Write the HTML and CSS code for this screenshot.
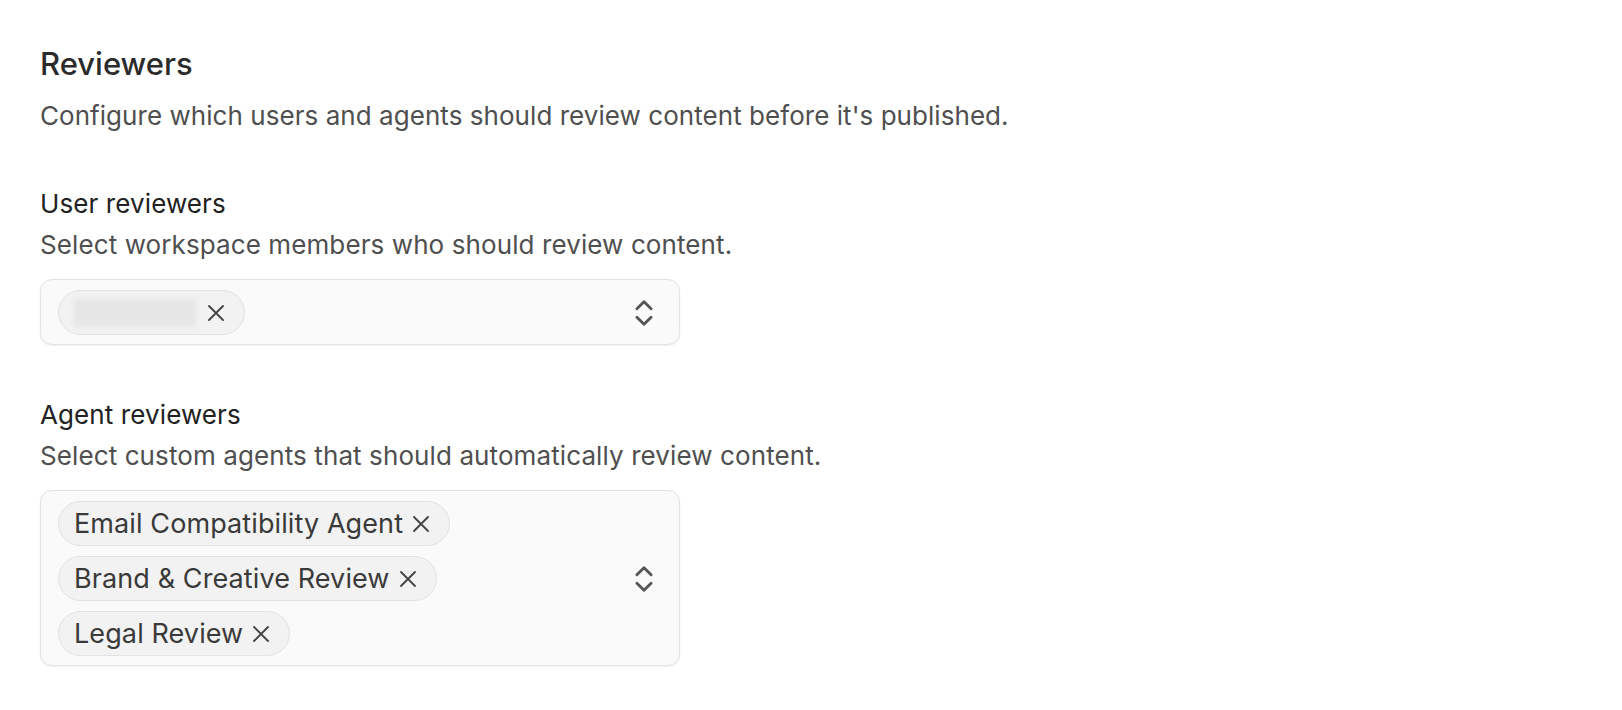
FILE: index.html
```html
<!DOCTYPE html>
<html lang="en">

<head>
  <meta charset="UTF-8">
  <meta name="viewport" content="width=device-width, initial-scale=1.0">
  <title>Reviewers</title>
  <link rel="stylesheet" href="styles.css">
</head>

<body>
  <div class="settings">
    <h1 class="settings-title">Reviewers</h1>
    <p class="settings-desc">Configure which users and agents should review content before it's published.</p>

    <div class="field">
      <div class="field-label">User reviewers</div>
      <div class="field-hint">Select workspace members who should review content.</div>
      <div class="multi-select">
        <div class="chips">
          <span class="chip">
            <span class="chip-hidden"></span>
            <svg class="chip-remove" viewBox="0 0 24 24"><path d="M18 6 6 18M6 6l12 12" /></svg>
          </span>
        </div>
        <svg class="select-arrows" viewBox="0 0 24 24"><path d="m7 15 5 5 5-5M7 9l5-5 5 5" /></svg>
      </div>
    </div>

    <div class="field">
      <div class="field-label">Agent reviewers</div>
      <div class="field-hint">Select custom agents that should automatically review content.</div>
      <div class="multi-select">
        <div class="chips">
          <span class="chip">Email Compatibility Agent
            <svg class="chip-remove" viewBox="0 0 24 24"><path d="M18 6 6 18M6 6l12 12" /></svg>
          </span>
          <span class="chip">Brand &amp; Creative Review
            <svg class="chip-remove" viewBox="0 0 24 24"><path d="M18 6 6 18M6 6l12 12" /></svg>
          </span>
          <span class="chip">Legal Review
            <svg class="chip-remove" viewBox="0 0 24 24"><path d="M18 6 6 18M6 6l12 12" /></svg>
          </span>
        </div>
        <svg class="select-arrows" viewBox="0 0 24 24"><path d="m7 15 5 5 5-5M7 9l5-5 5 5" /></svg>
      </div>
    </div>
  </div>
</body>

</html>
```

FILE: styles.css
```css
body {
  margin: 0;
  background-color: #fff;
  font-family: Inter, "Noto Sans", sans-serif;
  color: #2b2b2b;
}

.settings {
  padding: 44px 40px;
}

.settings-title {
  margin: 0;
  font-size: 31px;
  line-height: 40px;
  font-weight: 500;
  color: #2b2b2b;
}

.settings-desc {
  margin: 14px 0 0;
  font-size: 26px;
  line-height: 36px;
  letter-spacing: 0.05px;
  color: #4f4f4f;
}

.field {
  margin-top: 52px;
}

.field-label {
  font-size: 26px;
  line-height: 36px;
  letter-spacing: 0.1px;
  color: #222;
}

.field-hint {
  margin-top: 5px;
  font-size: 26px;
  line-height: 36px;
  letter-spacing: 0.1px;
  color: #4f4f4f;
}

.multi-select {
  display: flex;
  align-items: center;
  width: 640px;
  box-sizing: border-box;
  margin-top: 16px;
  padding: 10px 18px 9px 17px;
  border: 1px solid #e3e3e3;
  border-radius: 12px;
  background-color: #fafafa;
  box-shadow: 0 1px 2px rgba(0, 0, 0, 0.06);
}

.chips {
  flex: 1;
  display: flex;
  flex-direction: column;
  align-items: flex-start;
  gap: 10px;
}

.chip {
  display: inline-flex;
  align-items: center;
  gap: 4px;
  height: 45px;
  box-sizing: border-box;
  padding: 0 14px 0 15px;
  border: 1px solid #e2e2e2;
  border-radius: 999px;
  background-color: #f2f2f2;
  font-size: 27px;
  letter-spacing: 0.1px;
  color: #3a3a3a;
}

.chip-hidden {
  width: 122px;
  height: 28px;
  margin-right: 2px;
  background-color: #e6e6e6;
  filter: blur(2.5px);
}

.chip-remove {
  width: 28px;
  height: 28px;
  fill: none;
  stroke: #444;
  stroke-width: 1.6;
  stroke-linecap: round;
}

.select-arrows {
  width: 34px;
  height: 34px;
  flex-shrink: 0;
  fill: none;
  stroke: #555;
  stroke-width: 2;
  stroke-linecap: round;
  stroke-linejoin: round;
}
```
